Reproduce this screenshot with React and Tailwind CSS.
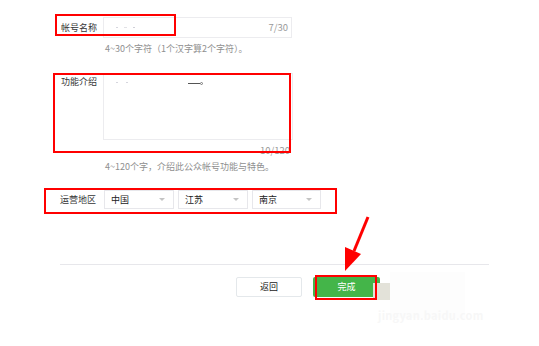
const font = { fontFamily: '"Noto Sans CJK SC", "Noto Sans", sans-serif' }

const Select = ({ value, width }) => (
  <div className={`flex h-[19px] items-center justify-between border border-[#e7e7eb] bg-white pl-[6px] pr-[8px] ${width}`}>
    <span className="text-[9px] leading-none text-[#222]">{value}</span>
    <span className="h-0 w-0 border-x-[3px] border-t-[3px] border-x-transparent border-t-[#c4c4c4]" />
  </div>
)

export default function App() {
  return (
    <div className="relative h-[346px] w-[539px] overflow-hidden bg-white" style={font}>
      <div className="flex flex-col pt-[17px]">
        {/* name */}
        <div className="flex items-center pl-[61px]">
          <span className="w-[42px] text-[9px] leading-none text-[#353535]">帐号名称</span>
          <div className="flex h-[21px] w-[189px] items-center justify-between border border-[#ececef] pl-[12px] pr-[3px]">
            <span className="flex gap-[6px]">
              <span className="h-[1px] w-[2px] bg-[#d6d6de]" />
              <span className="h-[1px] w-[3px] bg-[#e2e2e6]" />
              <span className="h-[1px] w-[2px] bg-[#d0d0d8]" />
            </span>
            <span className="text-[9.5px] leading-none text-[#9a9a9a]">7/30</span>
          </div>
        </div>
        <p className="mt-[5px] pl-[105px] text-[9px] leading-[12px] text-[#8f8f8f]">4~30个字符（1个汉字算2个字符）。</p>

        {/* intro */}
        <div className="mt-[18px] flex items-start pl-[61px]">
          <span className="w-[42px] pt-[4px] text-[9px] leading-none text-[#353535]">功能介绍</span>
          <div className="flex h-[67px] w-[190px] items-start border border-[#ececef] pl-[12px] pt-[8px]">
            <span className="h-[1px] w-[2px] bg-[#d6d6de]" />
            <span className="ml-[8px] h-[1px] w-[2px] bg-[#d6d6de]" />
            <span className="ml-[60px] mt-[1px] h-[1px] w-[12px] bg-[#555]" />
            <span className="h-[3px] w-[3px] rounded-full border border-[#777]" />
          </div>
        </div>
        <div className="mt-[4px] flex w-[290px] justify-end">
          <span className="text-[9.5px] leading-[12px] text-[#9a9a9a]">10/120</span>
        </div>
        <p className="mt-[5px] pl-[105px] text-[9px] leading-[12px] text-[#8f8f8f]">4~120个字，介绍此公众帐号功能与特色。</p>

        {/* region */}
        <div className="mt-[17px] flex items-center pl-[60px]">
          <span className="w-[44px] text-[9px] leading-none text-[#353535]">运营地区</span>
          <div className="flex gap-[4px]">
            <Select value="中国" width="w-[70px]" />
            <Select value="江苏" width="w-[70px]" />
            <Select value="南京" width="w-[69px]" />
          </div>
        </div>

        <div className="ml-[60px] mt-[55px] h-px w-[429px] bg-[#e7e7eb]" />

        <div className="mt-[12px] flex gap-[11px] pl-[236px]">
          <button className="flex h-[20px] w-[66px] items-center justify-center rounded-[2px] border border-[#e4e8eb] bg-white text-[9px] text-[#222]">返回</button>
          <button className="flex h-[20px] w-[67px] items-center justify-center rounded-[2px] bg-[#44b549] text-[9px] text-white">完成</button>
        </div>
      </div>

      {/* watermark smudge */}
      <div className="absolute left-[373px] top-[283px] h-[17px] w-[17px] bg-[#e3e2d9]" />
      <div className="absolute left-[390px] top-[272px] h-[46px] w-[75px] bg-[#fdfdfd]" />
      <div className="absolute left-[378px] top-[307px] text-[11px] font-bold tracking-wide text-[#f7f7f7]">jingyan.baidu.com</div>

      {/* annotations */}
      <div className="absolute left-[55px] top-[14px] h-[22px] w-[121px] border-2 border-[#f00]" />
      <div className="absolute left-[53px] top-[73px] h-[80px] w-[238px] border-2 border-[#f00]" />
      <div className="absolute left-[44px] top-[188px] h-[26px] w-[293px] border-2 border-[#f00]" />
      <div className="absolute left-[315px] top-[275px] h-[25px] w-[62px] border-2 border-[#f00]" />
      <svg className="absolute left-0 top-0" width="539" height="346" viewBox="0 0 539 346">
        <line x1="368" y1="217" x2="354" y2="251" stroke="#f00" strokeWidth="3" />
        <polygon points="345,247 361,254 345,271" fill="#f00" />
      </svg>
    </div>
  )
}
